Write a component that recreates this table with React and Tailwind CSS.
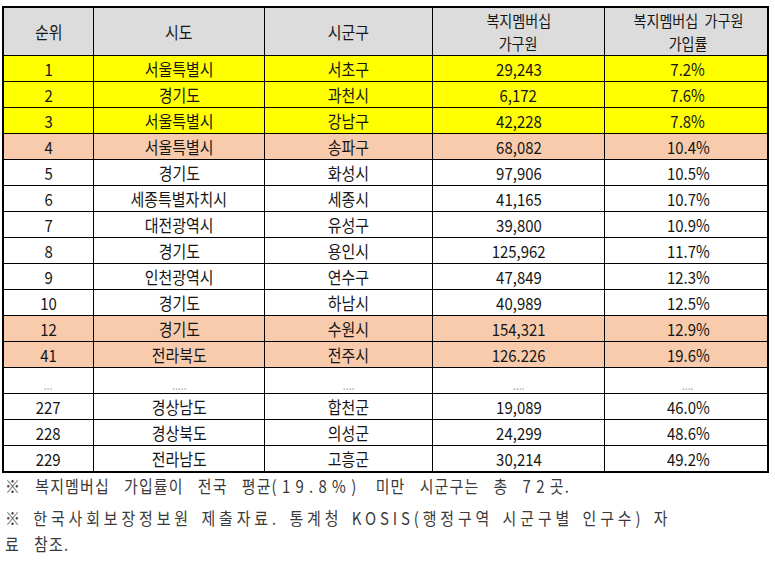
import React from "react";

const rows = [
  ["1", "서울특별시", "서초구", "29,243", "7.2%", "y"],
  ["2", "경기도", "과천시", "6,172", "7.6%", "y"],
  ["3", "서울특별시", "강남구", "42,228", "7.8%", "y"],
  ["4", "서울특별시", "송파구", "68,082", "10.4%", "o"],
  ["5", "경기도", "화성시", "97,906", "10.5%", ""],
  ["6", "세종특별자치시", "세종시", "41,165", "10.7%", ""],
  ["7", "대전광역시", "유성구", "39,800", "10.9%", ""],
  ["8", "경기도", "용인시", "125,962", "11.7%", ""],
  ["9", "인천광역시", "연수구", "47,849", "12.3%", ""],
  ["10", "경기도", "하남시", "40,989", "12.5%", ""],
  ["12", "경기도", "수원시", "154,321", "12.9%", "o"],
  ["41", "전라북도", "전주시", "126.226", "19.6%", "o"],
  ["...", ".....", "....", "....", "....", "e"],
  ["227", "경상남도", "합천군", "19,089", "46.0%", ""],
  ["228", "경상북도", "의성군", "24,299", "48.6%", ""],
  ["229", "전라남도", "고흥군", "30,214", "49.2%", ""],
];

const grid = "grid grid-cols-[89px_171px_168px_172px_167px]";
const txt = "inline-block whitespace-nowrap scale-x-[0.88]";

export default function App() {
  return (
    <div
      className="w-[775px] h-[570px] bg-white overflow-hidden"
      style={{ fontFamily: '"Noto Sans CJK KR", "Noto Sans", sans-serif' }}
    >
      <div className="ml-[2px] mt-[6px] w-[767px] border-2 border-black text-[17px] text-[#161616]">
        <div className={`${grid} h-[47px] bg-[#dcdcdc]`}>
          <div className="flex items-center justify-center">
            <span className={txt}>순위</span>
          </div>
          <div className="flex items-center justify-center border-l border-black">
            <span className={txt}>시도</span>
          </div>
          <div className="flex items-center justify-center border-l border-black">
            <span className={txt}>시군구</span>
          </div>
          <div className="flex flex-col items-center justify-center border-l border-black text-[16px] leading-[23px]">
            <span className={txt}>복지멤버십</span>
            <span className={txt}>가구원</span>
          </div>
          <div className="flex flex-col items-center justify-center border-l border-black text-[16px] leading-[23px]">
            <span className={txt}>복지멤버십&nbsp;&nbsp;가구원</span>
            <span className={txt}>가입률</span>
          </div>
        </div>
        {rows.map((r, i) => {
          const bg =
            r[5] === "y" ? "bg-[#ffff00]" : r[5] === "o" ? "bg-[#f8cbad]" : "bg-white";
          const ell = r[5] === "e";
          return (
            <div key={i} className={`${grid} h-[26px] border-t border-black ${bg}`}>
              {r.slice(0, 5).map((c, j) => (
                <div
                  key={j}
                  className={`flex justify-center ${
                    ell
                      ? "items-end pb-[2px] text-[12px] text-[#aaa] leading-[12px]"
                      : "items-center leading-[25px]"
                  } ${j > 0 ? "border-l border-black" : ""}`}
                >
                  <span className={txt}>{c}</span>
                </div>
              ))}
            </div>
          );
        })}
      </div>
      <div className="pl-[5px] pt-0 text-[17px] text-[#3a3a3a]">
        <p className="leading-[26px]">
          <span className={`${txt} origin-left tracking-[1.3px] [word-spacing:11px]`}>
            ※ 복지멤버십 가입률이 전국 평균<span className="tracking-[6px]">(19.8%)</span> 미만 시군구는 총{" "}
            <span className="tracking-[6px]">72</span>곳.
          </span>
        </p>
        <p className="mt-[6px] leading-[26px]">
          <span className={`${txt} origin-left tracking-[4.4px] [word-spacing:2.5px]`}>
            ※ 한국사회보장정보원 제출자료. 통계청 KOSIS(행정구역 시군구별 인구수) 자
          </span>
        </p>
        <p className="leading-[26px]">
          <span className={`${txt} origin-left tracking-[1.3px] [word-spacing:11px]`}>료 참조.</span>
        </p>
      </div>
    </div>
  );
}
